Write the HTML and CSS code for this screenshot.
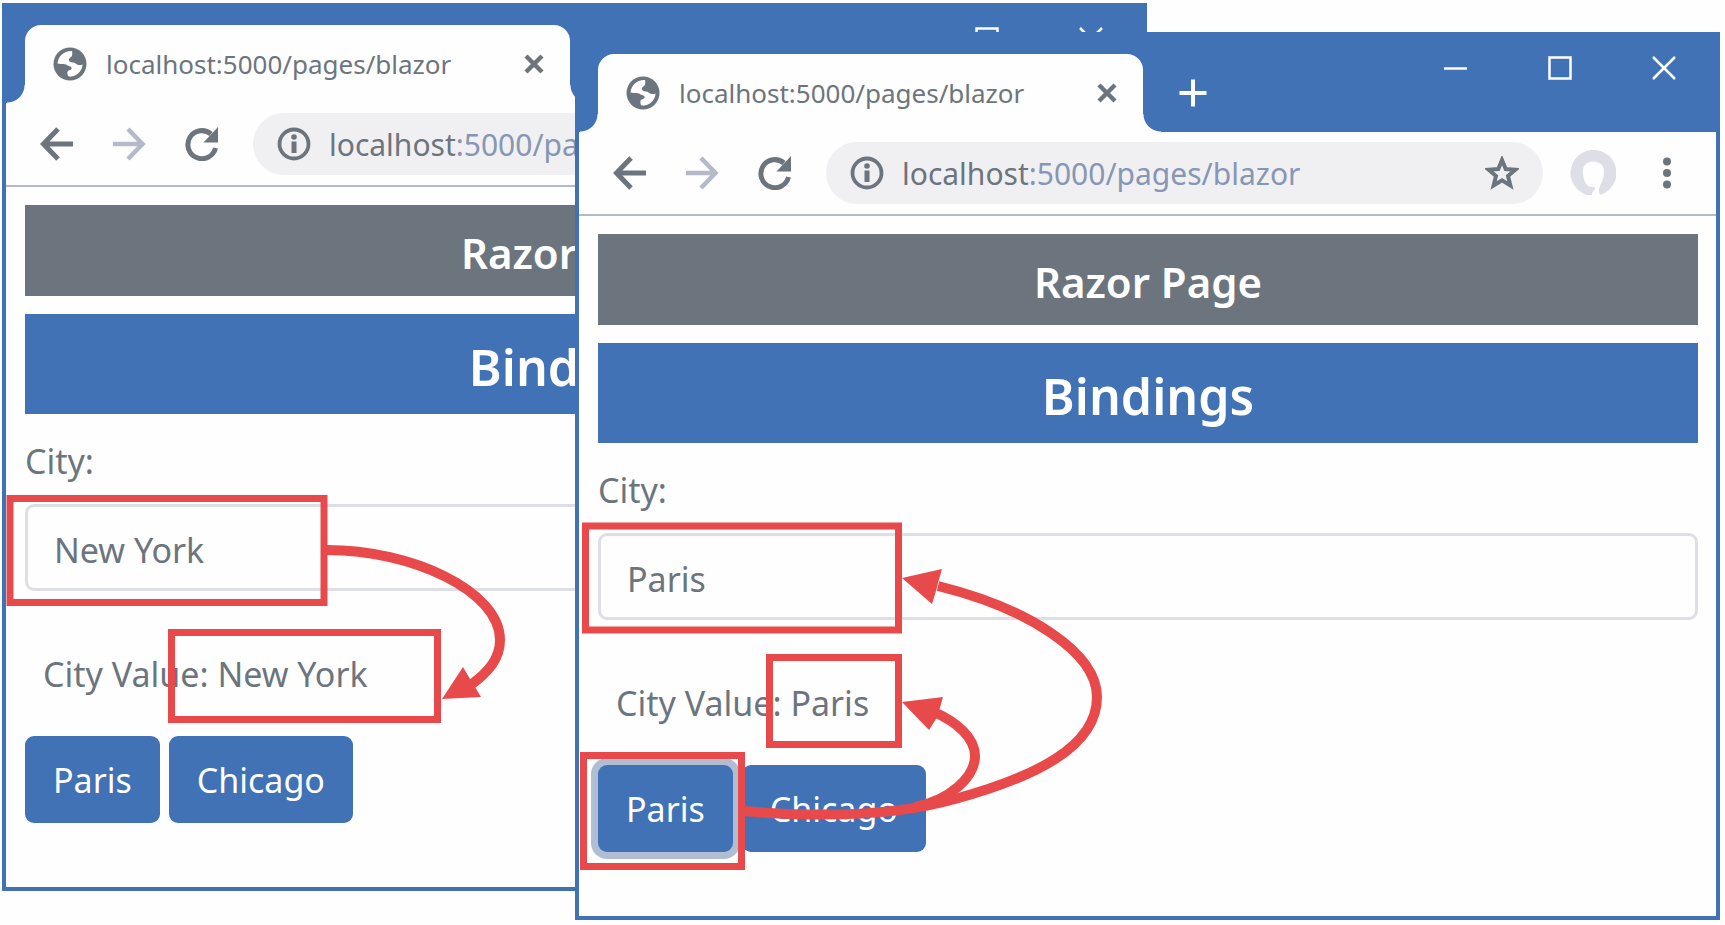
FILE: index.html
```html
<!DOCTYPE html>
<html lang="en">
<head>
<meta charset="utf-8">
<title>Blazor bindings</title>
<link rel="stylesheet" href="styles.css">
</head>
<body>
<svg class="symbols" aria-hidden="true">
  <symbol id="globe" viewBox="0 0 34 34"><circle cx="17" cy="17" r="16.500" fill="currentColor"/><path d="M19 4C11 3.500 5 9.500 4.500 16.500c3 1 7-.5 9.500 1.500 1.500 1.500 4 .8 4.600 2.800.4 2-2 2.200-3.600 3.200-1.200 1.300-.6 3-.2 4.500 1 1.500 3 1.300 4.700.8C25 28 29.500 23 29.500 17.500c-2.500.9-5 .7-6.500-.8-1.800-1.700-4.500-.7-6.200-1.900-1.500-1.500-.8-3.500.7-4.500 1.300-.7 1.800-1.600 1.700-3C19.200 6 19.500 5 19 4z" fill="#fff"/></symbol>
  <symbol id="cross" viewBox="0 0 20 20"><path d="M2 2l16 16M18 2L2 18" stroke="currentColor" stroke-width="4.500" fill="none"/></symbol>
  <symbol id="back" viewBox="0 0 34 34"><path d="M33 17H4M18 2L3.500 17 18 32" stroke="currentColor" stroke-width="5" fill="none"/></symbol>
  <symbol id="forward" viewBox="0 0 34 34"><path d="M1 17h29M16 2l14.500 15L16 32" stroke="currentColor" stroke-width="4.500" fill="none"/></symbol>
  <symbol id="reload" viewBox="0 0 34 34"><path d="M31.500 21A14 14 0 1 1 27 7" stroke="currentColor" stroke-width="5" fill="none"/><path d="M34 0v15.500H19.500z" fill="currentColor"/></symbol>
  <symbol id="info" viewBox="0 0 34 34"><circle cx="17" cy="17" r="14.500" stroke="currentColor" stroke-width="3.800" fill="none"/><circle cx="17" cy="10" r="2.800" fill="currentColor"/><path d="M14.500 14.500h5v11.500h-5z" fill="currentColor"/></symbol>
  <symbol id="star" viewBox="0 0 34 34"><path d="M17 4l3.700 9 9.800.700-7.500 6.300 2.400 9.500-8.400-5.200-8.400 5.200L11 20l-7.500-6.300 9.800-.7z" stroke="currentColor" stroke-width="4" fill="none"/></symbol>
  <symbol id="avatar" viewBox="0 0 46 46"><path d="M17 45A23 23 0 1 1 30 45C28 41 29 38 31 34 33 30 34 25 34 21c0-6-5-9.500-11-9.500S13 15 13 21c0 6 1 12 6 15.500 4 1 5.500-.5 6 2-1 3-3 2.500-3 6.500z" fill="currentColor"/></symbol>
  <symbol id="dots" viewBox="0 0 34 34"><g fill="currentColor"><circle cx="17" cy="5.500" r="4"/><circle cx="17" cy="17" r="4"/><circle cx="17" cy="28.500" r="4"/></g></symbol>
  <symbol id="plus" viewBox="0 0 28 28"><path d="M14 .500v27M.500 14h27" stroke="currentColor" stroke-width="4" fill="none"/></symbol>
  <symbol id="minimize" viewBox="0 0 24 24"><path d="M0 12.500h23" stroke="currentColor" stroke-width="2.500" fill="none"/></symbol>
  <symbol id="maximize" viewBox="0 0 24 24"><path d="M1.500 1.500h21v21h-21z" stroke="currentColor" stroke-width="2.500" fill="none"/></symbol>
  <symbol id="quit" viewBox="0 0 24 24"><path d="M1 1l22 22M23 1L1 23" stroke="currentColor" stroke-width="2.500" fill="none"/></symbol>
</svg>

<div class="desktop">
  <section class="window window-rear" aria-label="Browser, New York">
    <header class="titlebar">
      <div class="tab">
        <svg class="icon"><use href="#globe"/></svg>
        <span class="tab-title">localhost:5000/pages/blazor</span>
        <button class="bare" aria-label="Close tab"><svg class="icon-close"><use href="#cross"/></svg></button>
      </div>
      <button class="bare new-tab" aria-label="New tab"><svg class="icon-plus"><use href="#plus"/></svg></button>
      <div class="window-controls">
        <button class="bare" aria-label="Minimize"><svg class="icon-window"><use href="#minimize"/></svg></button>
        <button class="bare" aria-label="Maximize"><svg class="icon-window"><use href="#maximize"/></svg></button>
        <button class="bare" aria-label="Close"><svg class="icon-window"><use href="#quit"/></svg></button>
      </div>
    </header>
    <nav class="toolbar">
      <div class="history">
        <button class="bare" aria-label="Back"><svg class="icon"><use href="#back"/></svg></button>
        <button class="bare faded" aria-label="Forward"><svg class="icon"><use href="#forward"/></svg></button>
        <button class="bare" aria-label="Reload"><svg class="icon"><use href="#reload"/></svg></button>
      </div>
      <div class="omnibox">
        <svg class="icon"><use href="#info"/></svg>
        <span class="url"><span class="host">localhost</span>:5000/pages/blazor</span>
        <button class="bare" aria-label="Bookmark"><svg class="icon"><use href="#star"/></svg></button>
      </div>
      <button class="bare profile" aria-label="Profile"><svg class="icon-avatar"><use href="#avatar"/></svg></button>
      <button class="bare" aria-label="Menu"><svg class="icon"><use href="#dots"/></svg></button>
    </nav>
    <main class="page">
      <h4 class="banner banner-page">Razor Page</h4>
      <h2 class="banner banner-component">Bindings</h2>
      <label class="field-label" for="city-rear">City:</label>
      <input class="field" id="city-rear" type="text" value="New York">
      <p class="value">City Value: New York</p>
      <div class="actions">
        <button class="btn">Paris</button>
        <button class="btn">Chicago</button>
      </div>
    </main>
    <svg class="notes" width="1145" height="888" aria-hidden="true">
      <rect x="8" y="495.500" width="314" height="104"/>
      <rect x="169.500" y="629.500" width="266" height="87"/>
      <path d="M325 547C410 547 498 588 498 637 498 656 486 669 470 681"/>
      <path class="head" d="M440 696l21-32 7 12 5 8 6 10z"/>
    </svg>
  </section>

  <section class="window window-front" aria-label="Browser, Paris">
    <header class="titlebar">
      <div class="tab">
        <svg class="icon"><use href="#globe"/></svg>
        <span class="tab-title">localhost:5000/pages/blazor</span>
        <button class="bare" aria-label="Close tab"><svg class="icon-close"><use href="#cross"/></svg></button>
      </div>
      <button class="bare new-tab" aria-label="New tab"><svg class="icon-plus"><use href="#plus"/></svg></button>
      <div class="window-controls">
        <button class="bare" aria-label="Minimize"><svg class="icon-window"><use href="#minimize"/></svg></button>
        <button class="bare" aria-label="Maximize"><svg class="icon-window"><use href="#maximize"/></svg></button>
        <button class="bare" aria-label="Close"><svg class="icon-window"><use href="#quit"/></svg></button>
      </div>
    </header>
    <nav class="toolbar">
      <div class="history">
        <button class="bare" aria-label="Back"><svg class="icon"><use href="#back"/></svg></button>
        <button class="bare faded" aria-label="Forward"><svg class="icon"><use href="#forward"/></svg></button>
        <button class="bare" aria-label="Reload"><svg class="icon"><use href="#reload"/></svg></button>
      </div>
      <div class="omnibox">
        <svg class="icon"><use href="#info"/></svg>
        <span class="url"><span class="host">localhost</span>:5000/pages/blazor</span>
        <button class="bare" aria-label="Bookmark"><svg class="icon"><use href="#star"/></svg></button>
      </div>
      <button class="bare profile" aria-label="Profile"><svg class="icon-avatar"><use href="#avatar"/></svg></button>
      <button class="bare" aria-label="Menu"><svg class="icon"><use href="#dots"/></svg></button>
    </nav>
    <main class="page">
      <h4 class="banner banner-page">Razor Page</h4>
      <h2 class="banner banner-component">Bindings</h2>
      <label class="field-label" for="city-front">City:</label>
      <input class="field" id="city-front" type="text" value="Paris">
      <p class="value">City Value: Paris</p>
      <div class="actions">
        <button class="btn btn-focused">Paris</button>
        <button class="btn">Chicago</button>
      </div>
    </main>
    <svg class="notes" width="1145" height="888" aria-hidden="true">
      <rect x="10.500" y="494" width="313" height="104"/>
      <rect x="194.500" y="625.500" width="129" height="87"/>
      <rect x="8.500" y="723.500" width="158" height="111"/>
      <path d="M168 779C250 786 320 784 380 767 460 745 522 715 522 665 522 620 452 576 363 554"/>
      <path d="M340 775C375 768 400 745 400 724 400 706 382 690 359 680"/>
      <path class="head" d="M327 546l40-9-4 14-2 8-4 13z"/>
      <path class="head" d="M327 670l41-5-4 14-3 8-7 11z"/>
    </svg>
  </section>
</div>
</body>
</html>
```
FILE: styles.css
```css
:root {
  --blue: #4072b5;
  --grey: #6c757d;
  --line: #dedee6;
  --red: #e84a4b;
}

* {
  box-sizing: border-box;
}

body {
  margin: 0;
  background: #fefefe;
  color: var(--grey);
  font-family: "Noto Sans", "Open Sans", sans-serif;
  font-size: 34px;
  line-height: 55px;
}

.symbols {
  display: none;
}

.desktop {
  position: relative;
  min-height: 100vh;
  overflow: hidden;
}

.window {
  position: absolute;
  border: 4px solid var(--blue);
  background: #fefefe;
}

.window-rear {
  top: 3px;
  left: 2px;
  right: 578px;
}

.window-front {
  top: 32px;
  left: 575px;
  right: 5px;
}

.bare {
  display: flex;
  padding: 0;
  border: 0;
  background: none;
  color: inherit;
}

.icon {
  flex: none;
  width: 34px;
  height: 34px;
}

.icon-close {
  width: 20px;
  height: 20px;
}

.icon-plus {
  width: 28px;
  height: 28px;
}

.icon-window {
  width: 24px;
  height: 24px;
}

.icon-avatar {
  width: 46px;
  height: 46px;
  color: var(--line);
}

.faded {
  color: #b5bacb;
}

.titlebar {
  display: flex;
  align-items: flex-start;
  padding: 18px 40px 0 19px;
  background: var(--blue);
  color: #fff;
}

.tab {
  position: relative;
  display: flex;
  align-items: center;
  gap: 19px;
  width: 545px;
  height: 78px;
  padding: 0 26px 0 28px;
  border-radius: 16px 16px 0 0;
  background: #fefefe;
  color: var(--grey);
}

.tab::before,
.tab::after {
  content: "";
  position: absolute;
  bottom: 0;
  width: 18px;
  height: 18px;
}

.tab::before {
  right: 100%;
  background: radial-gradient(circle at 0 0, transparent 17px, #fefefe 18px);
}

.tab::after {
  left: 100%;
  background: radial-gradient(circle at 100% 0, transparent 17px, #fefefe 18px);
}

.tab-title {
  flex: 1;
  font-size: 26px;
  white-space: nowrap;
}

.new-tab {
  margin: 25px 0 0 36px;
}

.window-controls {
  display: flex;
  gap: 80px;
  margin: 2px 0 0 auto;
}

.toolbar {
  display: flex;
  align-items: center;
  height: 84px;
  padding: 0 32px 0 34px;
  border-bottom: 2px solid #b5bacb;
}

.history {
  display: flex;
  gap: 38px;
  margin-right: 35px;
}

.omnibox {
  display: flex;
  flex: 1;
  align-items: center;
  gap: 18px;
  height: 62px;
  padding: 0 24px;
  border-radius: 31px;
  background: #f0f0f3;
}

.url {
  flex: 1;
  color: #8796b3;
  font-size: 30px;
  white-space: nowrap;
}

.host {
  color: var(--grey);
}

.profile {
  margin: 0 34px 0 27px;
}

.page {
  display: flex;
  flex-direction: column;
  padding: 18px 18px 64px 19px;
}

.banner {
  margin: 0 0 18px;
  color: #fff;
  font-weight: 600;
  text-align: center;
}

.banner-page {
  padding: 20px 18px 15px;
  background: var(--grey);
  font-size: 42px;
  line-height: 56px;
}

.banner-component {
  padding: 21px 18px 14px;
  background: var(--blue);
  font-size: 50px;
  line-height: 65px;
}

.field-label {
  padding-top: 2px;
  margin-bottom: 15px;
}

.field {
  width: 100%;
  height: 87px;
  padding: 5px 26px 0;
  border: 3px solid var(--line);
  border-radius: 9px;
  background: transparent;
  color: inherit;
  font: inherit;
}

.value {
  margin: 56px 18px 34px;
}

.actions {
  display: flex;
  gap: 9px;
}

.btn {
  height: 87px;
  padding: 2px 28px 0;
  border: 0;
  border-radius: 9px;
  background: var(--blue);
  color: #fefefe;
  font: inherit;
}

.btn-focused {
  box-shadow: 0 0 0 7px #b0bdd3;
}

.notes {
  position: absolute;
  top: -4px;
  left: -4px;
  fill: none;
  stroke: var(--red);
  stroke-width: 7px;
  pointer-events: none;
}

.notes path {
  stroke-width: 10px;
}

.notes .head {
  fill: var(--red);
  stroke: none;
}
```
